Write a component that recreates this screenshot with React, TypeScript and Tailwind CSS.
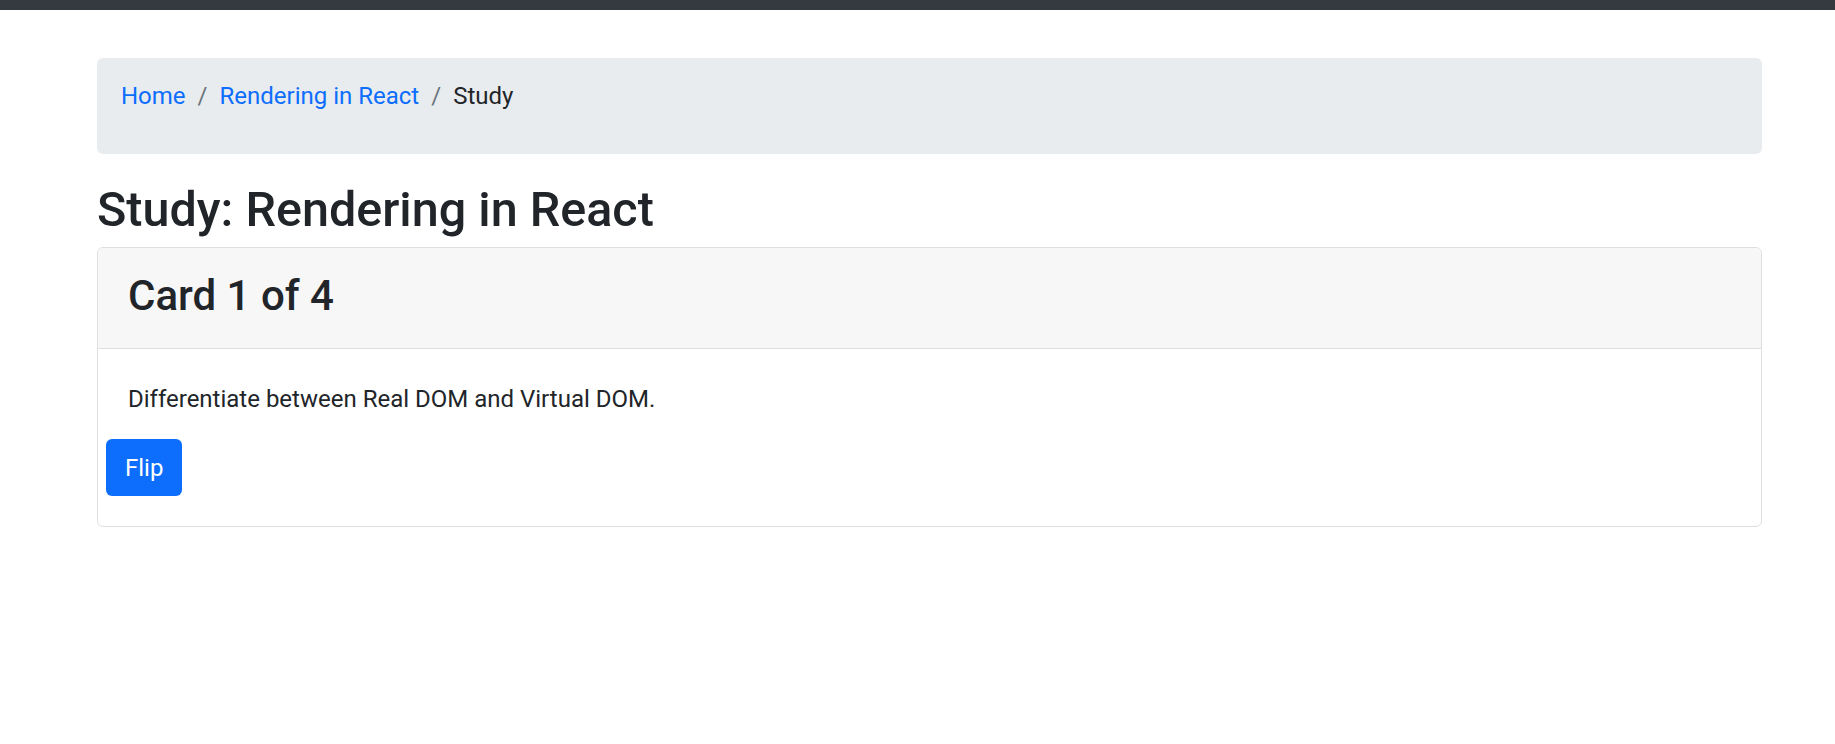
import React from 'react';

const crumbs = [
  { label: 'Home', href: '#' },
  { label: 'Rendering in React', href: '#' },
];

export default function App() {
  return (
    <div className="min-h-screen bg-white text-[#212529] font-['Roboto','Liberation_Sans',sans-serif]">
      <div className="h-[10px] bg-[#343a40]" />

      <div className="pl-[97px] pr-[73px] pt-[48px]">
        <nav className="rounded-[6px] bg-[#e9ecef] px-6 pt-[20px] pb-[40px]">
          <ol className="flex items-center text-[24px] leading-[36px]">
            {crumbs.map((c) => (
              <li key={c.label} className="flex items-center">
                <a href={c.href} className="text-[#0d6efd]">
                  {c.label}
                </a>
                <span className="px-3 text-[#6c757d]">/</span>
              </li>
            ))}
            <li>Study</li>
          </ol>
        </nav>

        <h2 className="mt-[27px] mb-[8px] text-[48.5px] leading-[58px] font-medium">
          Study: Rendering in React
        </h2>

        <div className="rounded-[6px] border border-[#dfdfdf]">
          <div className="h-[101px] rounded-t-[6px] border-b border-[#dfdfdf] bg-[#f7f7f7] px-[30px] pt-[23px]">
            <h3 className="text-[42px] leading-[50px] font-medium">Card 1 of 4</h3>
          </div>
          <div className="px-[8px] pt-[32px] pb-[30px]">
            <p className="mb-[22px] px-[22px] text-[24px] leading-[36px]">
              Differentiate between Real DOM and Virtual DOM.
            </p>
            <button className="h-[57px] rounded-[6px] bg-[#0d6efd] px-[19px] text-[24px] leading-[36px] text-white">
              Flip
            </button>
          </div>
        </div>
      </div>
    </div>
  );
}
